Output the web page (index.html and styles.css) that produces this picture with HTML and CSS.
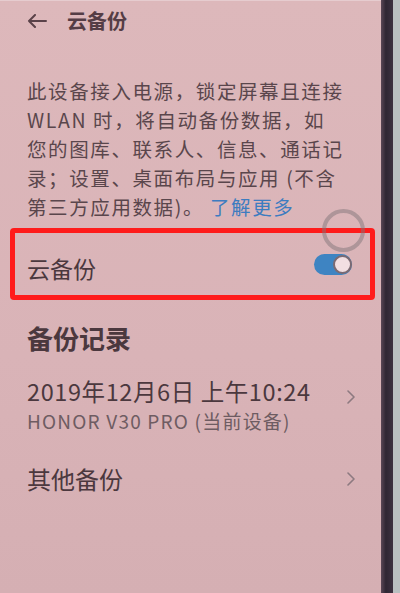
FILE: index.html
```html
<!DOCTYPE html>
<html lang="zh-CN">
<head>
    <meta charset="UTF-8" />
    <meta name="viewport" content="width=device-width, initial-scale=1.0" />
    <title>云备份</title>
    <link rel="stylesheet" href="styles.css">
</head>
<body>
    <div class="phone">
        <div class="screen">
            <div class="topbar">
                <svg class="back" width="20" height="14" viewBox="0 0 20 14">
                    <path d="M19 7H2M8 1L2 7l6 6" fill="none" stroke="#5a4249" stroke-width="2" stroke-linecap="round" stroke-linejoin="round"/>
                </svg>
                <h1>云备份</h1>
            </div>

            <p class="desc">此设备接入电源，锁定屏幕且连接<br>WLAN 时，将自动备份数据，如<br>您的图库、联系人、信息、通话记<br>录；设置、桌面布局与应用 (不含<br>第三方应用数据)。<a class="more">了解更多</a></p>

            <div class="switch-row">
                <span class="label">云备份</span>
                <span class="toggle"><span class="thumb"></span></span>
                <span class="touch"></span>
            </div>

            <h2>备份记录</h2>

            <div class="item record">
                <div>
                    <div class="title">2019年12月6日 上午10:24</div>
                    <div class="sub">HONOR V30 PRO (当前设备)</div>
                </div>
                <svg class="chev" width="8" height="14" viewBox="0 0 8 14"><path d="M1 1l6 6-6 6" fill="none" stroke="#8d7a80" stroke-width="1.6" stroke-linecap="round" stroke-linejoin="round"/></svg>
            </div>

            <div class="item other">
                <div class="title">其他备份</div>
                <svg class="chev" width="8" height="14" viewBox="0 0 8 14"><path d="M1 1l6 6-6 6" fill="none" stroke="#8d7a80" stroke-width="1.6" stroke-linecap="round" stroke-linejoin="round"/></svg>
            </div>
        </div>
        <div class="bezel"></div>
        <div class="edge"></div>
    </div>
</body>
</html>
```

FILE: styles.css
```css
body {
    margin: 0;
    font-family: "Noto Sans CJK SC", "Noto Sans", sans-serif;
    color: #4b383e;
}

.phone {
    display: flex;
    width: 400px;
    height: 593px;
    overflow: hidden;
}

.screen {
    width: 381px;
    flex-shrink: 0;
    background: linear-gradient(180deg, #ddb8bb 0%, #d9b3b7 60%, #d5afb3 100%);
    padding-left: 27px;
    box-sizing: border-box;
    border-top: 1px solid #e6cccf;
}

.bezel {
    width: 12px;
    background: linear-gradient(90deg, #5b4756 0%, #2f2633 40%, #3d3140 100%);
}

.edge {
    flex: 1;
    background: #b9bfc0;
}

.topbar {
    display: flex;
    align-items: center;
    height: 39px;
}

h1 {
    margin: 0 0 0 20px;
    font-size: 20px;
    font-weight: bold;
    color: #553d45;
}

.desc {
    margin: 36px 0 0 0;
    font-size: 19.5px;
    line-height: 29px;
    letter-spacing: 1.6px;
    color: #5a464c;
}

.more {
    color: #3d7cc0;
    margin-left: 6px;
}

.switch-row {
    position: relative;
    display: flex;
    align-items: center;
    justify-content: space-between;
    margin: 7px 6px 0 -17px;
    height: 62px;
    border: 5px solid #ff1b1b;
    border-radius: 4px;
    padding: 0 18px 0 12px;
}

.label {
    font-size: 23px;
    padding-top: 8px;
    color: #4b383e;
}

.toggle {
    display: flex;
    justify-content: flex-end;
    align-items: center;
    width: 38px;
    height: 21px;
    border-radius: 11px;
    background: #3e84c2;
}

.thumb {
    width: 19px;
    height: 19px;
    border-radius: 50%;
    background: #f2dfe2;
    border: 2px solid #7b6a72;
    box-sizing: border-box;
}

.touch {
    position: absolute;
    right: 5px;
    top: -24px;
    width: 43px;
    height: 43px;
    border-radius: 50%;
    border: 4px solid rgba(130, 118, 122, 0.5);
    box-sizing: border-box;
}

h2 {
    margin: 22px 0 0 0;
    font-size: 26px;
    line-height: 32px;
    font-weight: bold;
    color: #4b383e;
}

.item {
    display: flex;
    align-items: center;
    justify-content: space-between;
    padding-right: 26px;
}

.record {
    margin-top: 22px;
}

.record .title {
    font-size: 23.5px;
    line-height: 30px;
    letter-spacing: 0.6px;
}

.record .sub {
    margin-top: 2px;
    font-size: 19px;
    line-height: 26px;
    letter-spacing: 1.2px;
    color: #6e5c62;
}

.record .chev {
    margin-top: -16px;
}

.other {
    margin-top: 30px;
}

.other .title {
    font-size: 24px;
    line-height: 30px;
}
```
